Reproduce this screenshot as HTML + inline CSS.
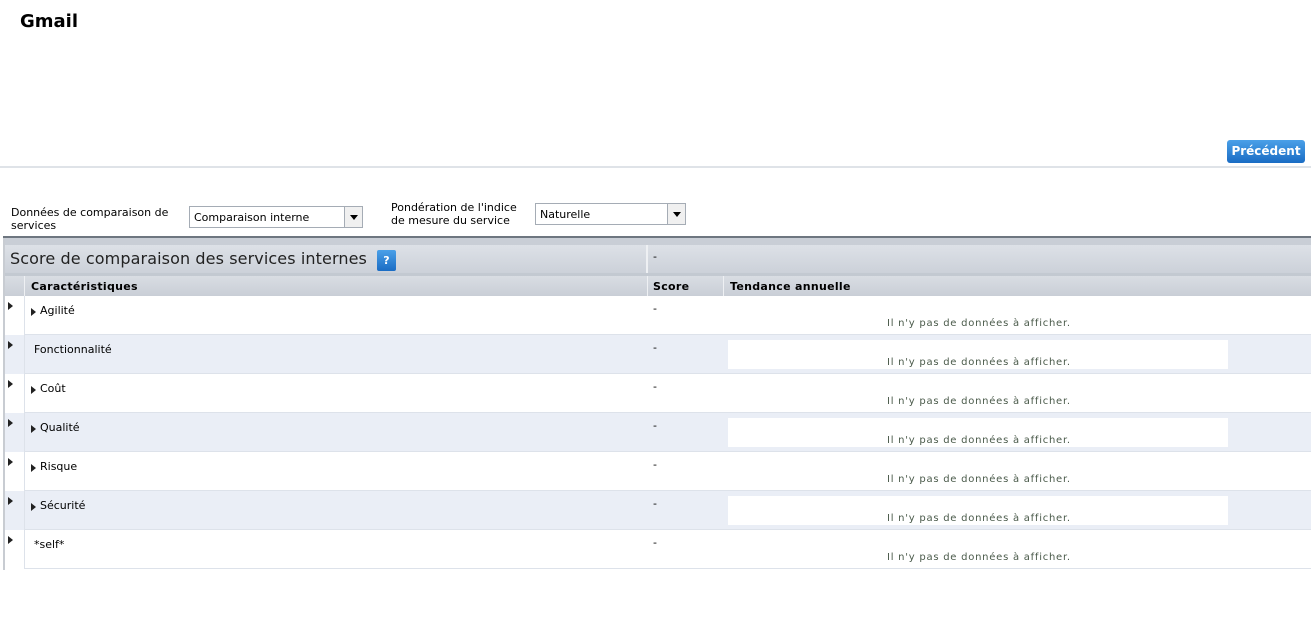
<!DOCTYPE html>
<html><head><meta charset="utf-8"><style>
*{margin:0;padding:0;box-sizing:border-box}
body{width:1311px;height:630px;background:#fff;font-family:"DejaVu Sans","Liberation Sans",sans-serif;font-size:11px;color:#000;position:relative;overflow:hidden}
.a{position:absolute}
.sel{position:absolute;border:1px solid #a5acb5;background:#fff;height:22px;font-size:11px;padding:4px 4px}
.sel .b{position:absolute;right:0;top:0;width:18px;height:20px;border-left:1px solid #a5acb5;background:#f0f0f0}
.sel .b:after{content:"";position:absolute;left:5px;top:8px;border-left:4px solid transparent;border-right:4px solid transparent;border-top:5px solid #000}
.row{position:absolute;left:5px;width:1306px;height:39px;border-bottom:1px solid #dde2ea}
.row.alt{background:#eaeef6}
.row .l{position:absolute;left:0;top:0;width:20px;height:39px;border-right:1px solid #dde2ea;background:#fff}
.row.alt .l{background:#eaeef6}
.tri{position:absolute;width:0;height:0;border-top:4px solid transparent;border-bottom:4px solid transparent;border-left:5px solid #222}
.box{position:absolute;left:723px;top:5px;width:500px;height:29px;background:#fff}
.nd{position:absolute;left:882px;top:22px;font-size:10px;color:#4a5a4a;letter-spacing:0.75px}
.name{position:absolute;left:35px;top:8px}
.sc{position:absolute;left:648px;top:6px}
</style></head><body>
<div class="a" style="left:20px;top:11px;font-size:18px;font-weight:bold;font-family:'DejaVu Sans',sans-serif">Gmail</div>
<div class="a" style="left:1227px;top:140px;width:78px;height:23px;border-radius:3px;background:linear-gradient(#4aa0e8,#1a6cc4);color:#fff;font-weight:bold;font-size:12px;text-align:center;line-height:23px">Précédent</div>
<div class="a" style="left:0;top:166px;width:1311px;height:2px;background:#dfe3e8"></div>
<div class="a" style="left:11px;top:206px;line-height:13px">Données de comparaison de<br>services</div>
<div class="sel" style="left:189px;top:206px;width:174px">Comparaison interne<div class="b"></div></div>
<div class="a" style="left:391px;top:201px;line-height:13px">Pondération de l'indice<br>de mesure du service</div>
<div class="sel" style="left:535px;top:203px;width:151px">Naturelle<div class="b"></div></div>
<div class="a" style="left:3px;top:236px;width:1308px;height:2px;background:#6e7680"></div>
<div class="a" style="left:3px;top:238px;width:2px;height:332px;background:#c8ccd2"></div>
<div class="a" style="left:5px;top:238px;width:1306px;height:7px;background:#c9ced6"></div>
<div class="a" style="left:5px;top:245px;width:1306px;height:28px;background:linear-gradient(#dde1e7,#ccd1d9)"></div>
<div class="a" style="left:646px;top:245px;width:2px;height:28px;background:#eef0f3"></div>
<div class="a" style="left:10px;top:249px;font-size:16px;font-family:'DejaVu Sans',sans-serif;color:#222;letter-spacing:0.1px">Score de comparaison des services internes</div>
<div class="a" style="left:377px;top:250px;width:19px;height:21px;border-radius:2px;background:linear-gradient(#4aa0e8,#1a6cc4);color:#fff;font-size:11px;font-weight:bold;text-align:center;line-height:21px">?</div>
<div class="a" style="left:653px;top:250px">-</div>
<div class="a" style="left:5px;top:273px;width:1306px;height:3px;background:#c3c9d1"></div>
<div class="a" style="left:5px;top:276px;width:1306px;height:20px;background:linear-gradient(#d9dde3,#c9ced6)"></div>
<div class="a" style="left:24px;top:276px;width:1px;height:20px;background:#eef0f3"></div>
<div class="a" style="left:647px;top:276px;width:1px;height:20px;background:#eef0f3"></div>
<div class="a" style="left:723px;top:276px;width:1px;height:20px;background:#eef0f3"></div>
<div class="a" style="left:31px;top:280px;font-weight:bold;letter-spacing:0.3px">Caractéristiques</div>
<div class="a" style="left:653px;top:280px;font-weight:bold;letter-spacing:0.3px">Score</div>
<div class="a" style="left:730px;top:280px;font-weight:bold;letter-spacing:0.3px">Tendance annuelle</div>

<div class="row" style="top:296px"><div class="l"><div class="tri" style="left:3px;top:6px"></div></div><div class="tri" style="left:26px;top:12px"></div><div class="name">Agilité</div><div class="sc">-</div><div class="nd">Il n'y pas de données à afficher.</div></div>
<div class="row alt" style="top:335px"><div class="l"><div class="tri" style="left:3px;top:6px"></div></div><div class="name" style="left:29px">Fonctionnalité</div><div class="sc">-</div><div class="box"></div><div class="nd">Il n'y pas de données à afficher.</div></div>
<div class="row" style="top:374px"><div class="l"><div class="tri" style="left:3px;top:6px"></div></div><div class="tri" style="left:26px;top:12px"></div><div class="name">Coût</div><div class="sc">-</div><div class="nd">Il n'y pas de données à afficher.</div></div>
<div class="row alt" style="top:413px"><div class="l"><div class="tri" style="left:3px;top:6px"></div></div><div class="tri" style="left:26px;top:12px"></div><div class="name">Qualité</div><div class="sc">-</div><div class="box"></div><div class="nd">Il n'y pas de données à afficher.</div></div>
<div class="row" style="top:452px"><div class="l"><div class="tri" style="left:3px;top:6px"></div></div><div class="tri" style="left:26px;top:12px"></div><div class="name">Risque</div><div class="sc">-</div><div class="nd">Il n'y pas de données à afficher.</div></div>
<div class="row alt" style="top:491px"><div class="l"><div class="tri" style="left:3px;top:6px"></div></div><div class="tri" style="left:26px;top:12px"></div><div class="name">Sécurité</div><div class="sc">-</div><div class="box"></div><div class="nd">Il n'y pas de données à afficher.</div></div>
<div class="row" style="top:530px"><div class="l"><div class="tri" style="left:3px;top:6px"></div></div><div class="name" style="left:29px">*self*</div><div class="sc">-</div><div class="nd">Il n'y pas de données à afficher.</div></div>
</body></html>
